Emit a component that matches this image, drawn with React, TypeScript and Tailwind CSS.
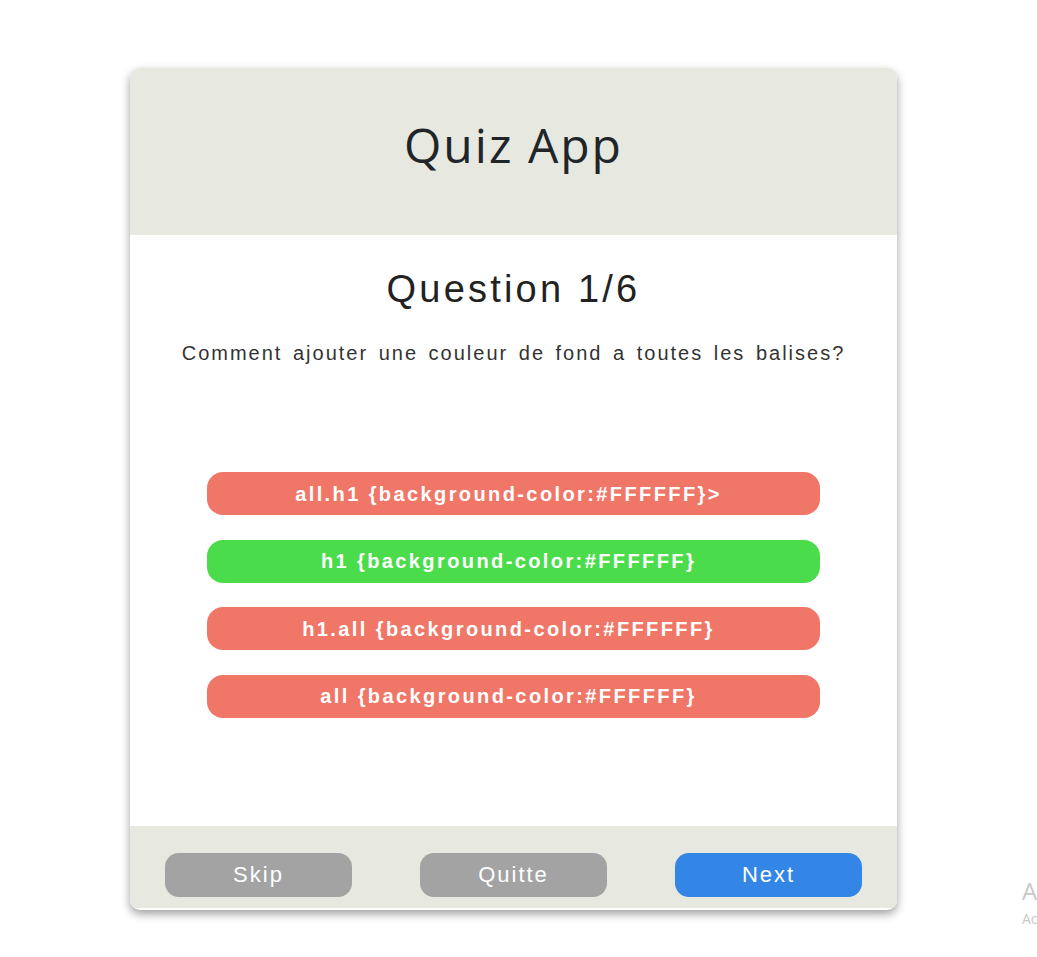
import { useState } from "react";

type Answer = {
  text: string;
  correct: boolean;
};

const answers: Answer[] = [
  { text: "all.h1 {background-color:#FFFFFF}>", correct: false },
  { text: "h1 {background-color:#FFFFFF}", correct: true },
  { text: "h1.all {background-color:#FFFFFF}", correct: false },
  { text: "all {background-color:#FFFFFF}", correct: false },
];

export default function App() {
  const [current] = useState(1);

  return (
    <div
      className="relative h-[957px] w-full overflow-hidden bg-white"
      style={{ fontFamily: '"Liberation Sans", Arial, sans-serif' }}
    >
      <div className="ml-[130px] mt-[68px] flex w-[767px] flex-col overflow-hidden rounded-[10px] bg-white pb-[2px] shadow-[0_4px_10px_rgba(0,0,0,0.38)]">
        <header className="h-[167px] bg-[#e7e9e1] pt-[53px] text-center">
          <h1 className="font-['Open_Sans',sans-serif] text-[48px] leading-[48px] tracking-[2px] text-[#212529]">
            Quiz App
          </h1>
        </header>

        <main className="flex h-[591px] flex-col items-center pt-[35px]">
          <h2 className="text-[38px] leading-[38px] tracking-[3.2px] text-[#222]">
            Question {current}/6
          </h2>
          <p className="mt-[35px] text-[20px] leading-[20px] tracking-[2px] text-[#333] [word-spacing:3px]">
            Comment ajouter une couleur de fond a toutes les balises?
          </p>

          <div className="mt-[109px] flex w-[613px] flex-col gap-[24.5px]">
            {answers.map((answer) => (
              <button
                key={answer.text}
                className={
                  answer.correct
                    ? "h-[43px] rounded-[16px] bg-[#4bdc4b] pr-[10px] text-[20px] font-bold tracking-[2.4px] text-white"
                    : "h-[43px] rounded-[16px] bg-[#f07667] pr-[10px] text-[20px] font-bold tracking-[2.4px] text-white"
                }
              >
                {answer.text}
              </button>
            ))}
          </div>
        </main>

        <footer className="flex h-[82px] items-start justify-between bg-[#e7e9e1] px-[35px] pt-[27px]">
          <button className="h-[44px] w-[187px] rounded-[14px] bg-[#a3a3a3] pb-[2px] text-[22px] tracking-[2px] text-white">
            Skip
          </button>
          <button className="h-[44px] w-[187px] rounded-[14px] bg-[#a3a3a3] pb-[2px] text-[22px] tracking-[2px] text-white">
            Quitte
          </button>
          <button className="h-[44px] w-[187px] rounded-[14px] bg-[#3385e6] pb-[2px] text-[22px] tracking-[2px] text-white">
            Next
          </button>
        </footer>
      </div>

      {/* windows watermark, only its first letters show at the edge */}
      <div className="absolute left-[1022px] top-[876px] font-['Open_Sans',sans-serif] text-[#c8c8c8]">
        <div className="text-[24px] leading-[30px]">A</div>
        <div className="mt-[3px] text-[14px] leading-[20px]">Ac</div>
      </div>
    </div>
  );
}
